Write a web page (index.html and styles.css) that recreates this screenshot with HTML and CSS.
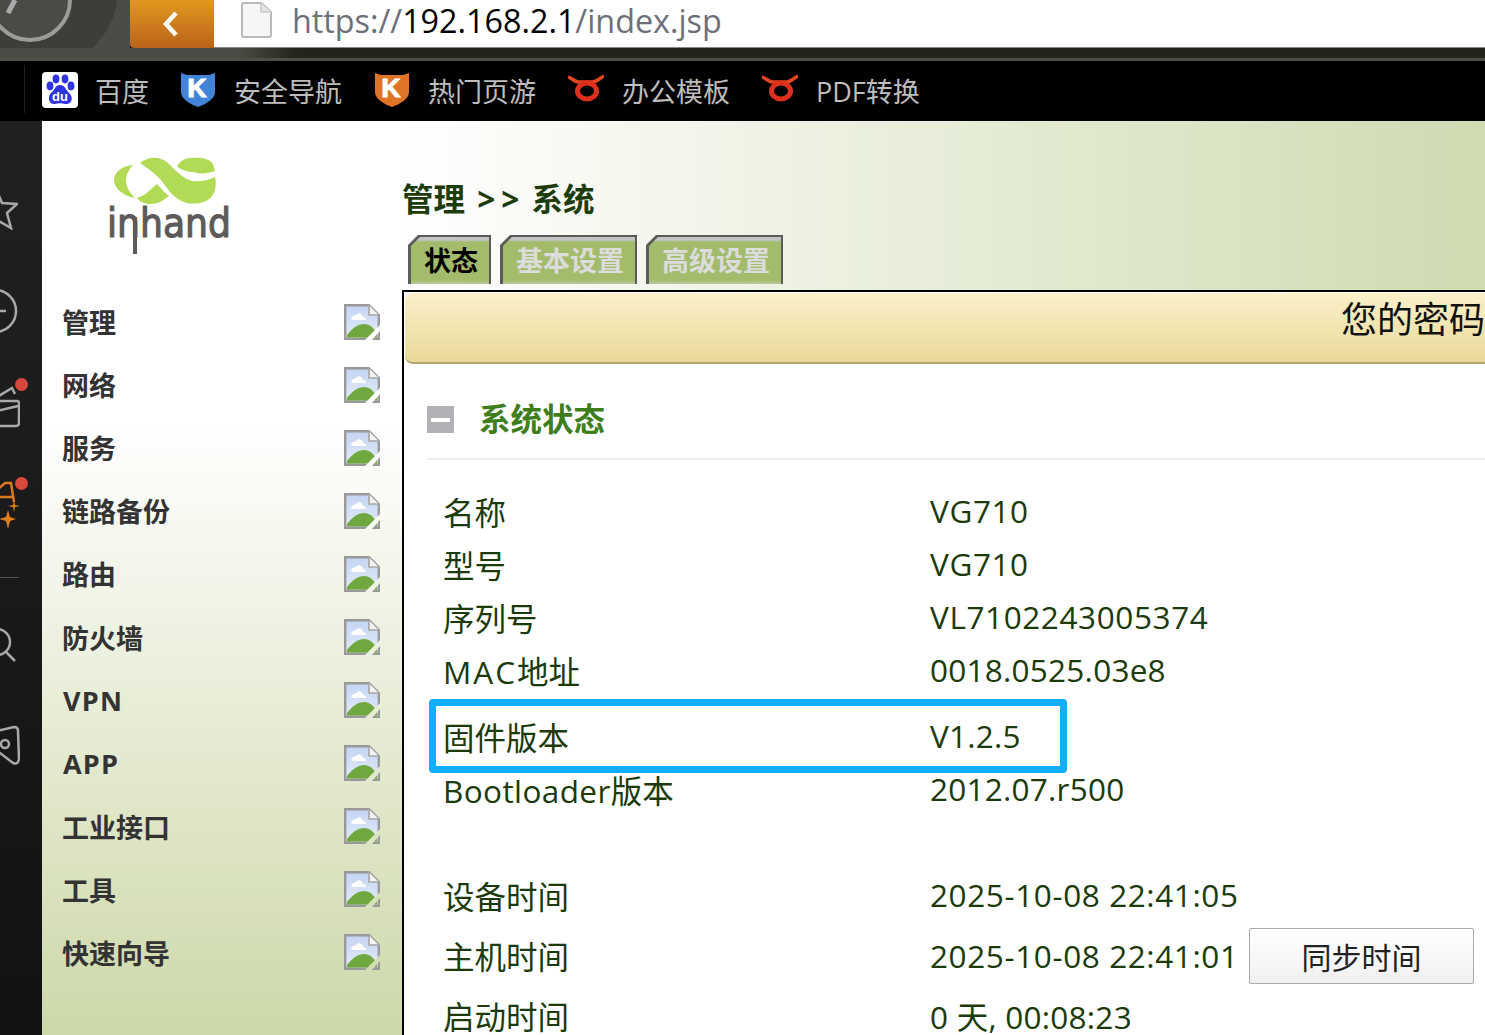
FILE: index.html
```html
<!DOCTYPE html>
<html lang="zh-CN">
<head>
    <meta charset="UTF-8">
    <title>管理 - 系统</title>
    <link rel="stylesheet" href="styles.css">
</head>
<body>
    <svg class="sprites" width="0" height="0">
        <defs>
            <linearGradient id="sky" x1="0" y1="0" x2="0" y2="1">
                <stop offset="0" stop-color="#c3d4f3"/>
                <stop offset="1" stop-color="#e4ecf8"/>
            </linearGradient>
            <mask id="slash" maskUnits="userSpaceOnUse" x="0" y="0" width="36" height="36">
                <rect width="36" height="36" fill="#fff"/>
                <path d="M20 37L37 20V26L27 37Z" fill="#000"/>
            </mask>
            <symbol id="broken" viewBox="0 0 36 36">
                <g mask="url(#slash)">
                    <path d="M1.2 1.2H25L34.8 11V34.8H1.2Z" fill="url(#sky)" stroke="#999" stroke-width="2.4"/>
                    <path d="M25 1.2V11H34.8" fill="#f4f4f4" stroke="#a5a5a5" stroke-width="1.6"/>
                    <path d="M7 15C8 11 12 12 13 10C16 8 19 11 19 13C22 13 23 16 21 16H8Z" fill="#fff"/>
                    <path d="M3 33.5V31C9 23 15 20 21 20C27 21 31 25 33 31V33.5Z" fill="#6fa83f"/>
                </g>
            </symbol>
            <symbol id="ox" viewBox="0 0 36 36">
                <path d="M0 5C4 6 5 9 10 10H25C30 9 32 6 36 4" fill="none" stroke="#e2451f" stroke-width="3.5"/>
                <ellipse cx="19" cy="19" rx="9.5" ry="8" fill="none" stroke="#dd2f1c" stroke-width="5"/>
            </symbol>
        </defs>
    </svg>

    <header class="topbar">
        <div class="wheel">
            <svg width="130" height="48" viewBox="0 0 130 48">
                <circle cx="40" cy="-10" r="78" fill="#3d3d39"/>
                <circle cx="30" cy="0" r="40" fill="#4a4a46" stroke="#9c9c96" stroke-width="4"/>
                <path d="M15 0L8 13" stroke="#aaa" stroke-width="5"/>
            </svg>
        </div>
        <div class="back">
            <svg width="22" height="30" viewBox="0 0 22 30"><path d="M16 4L6 15L16 26" fill="none" stroke="#fff" stroke-width="4.5"/></svg>
        </div>
        <div class="address">
            <svg class="doc" width="32" height="36" viewBox="0 0 32 36">
                <path d="M2 3Q2 1 4 1H21L31 10V33Q31 35 29 35H4Q2 35 2 33Z" fill="#f6f6f6" stroke="#b9b9b9" stroke-width="2"/>
                <path d="M21 1V10H31" fill="#e6e6e6" stroke="#c6c6c6" stroke-width="1.5"/>
            </svg>
            <span class="url">https://<b>192.168.2.1</b>/index.jsp</span>
        </div>
    </header>
    <div class="strip"></div>

    <nav class="bookmarks">
        <span class="bm-sep"></span>
        <a class="bm bm-first">
            <svg width="36" height="36" viewBox="0 0 36 36">
                <rect width="36" height="36" rx="4" fill="#fff"/>
                <g fill="#2f35e0">
                    <ellipse cx="8" cy="14" rx="3.4" ry="4.4"/>
                    <ellipse cx="14" cy="7" rx="3.4" ry="4.4"/>
                    <ellipse cx="23" cy="7" rx="3.4" ry="4.4"/>
                    <ellipse cx="29" cy="14" rx="3.4" ry="4.4"/>
                    <path d="M18 13C13 13 13 18 9 21C5 25 7 33 13 32C16 31 20 31 23 32C30 33 32 25 27 21C24 18 23 13 18 13Z"/>
                </g>
                <text x="18" y="29" class="bd-text">du</text>
            </svg>
            百度
        </a>
        <a class="bm">
            <svg width="36" height="36" viewBox="0 0 36 36">
                <path d="M1 1L7 3H29L35 1V20C35 27 26 32 18 35C10 32 1 27 1 20Z" fill="#4285d8"/>
                <text x="17" y="25" class="shield-text">K</text>
            </svg>
            安全导航
        </a>
        <a class="bm">
            <svg width="36" height="36" viewBox="0 0 36 36">
                <path d="M1 1L7 3H29L35 1V20C35 27 26 32 18 35C10 32 1 27 1 20Z" fill="#df7426"/>
                <text x="17" y="25" class="shield-text">K</text>
            </svg>
            热门页游
        </a>
        <a class="bm"><svg width="36" height="36"><use href="#ox"/></svg>办公模板</a>
        <a class="bm"><svg width="36" height="36"><use href="#ox"/></svg>PDF转换</a>
    </nav>

    <div class="workspace">
        <aside class="dock">
            <div class="dock-item">
                <svg width="18" height="40" viewBox="0 0 18 40"><path d="M-3 1L2 13L17 14L7 23L11 38L-3 30" fill="none" stroke="#a8a8a8" stroke-width="2.5"/></svg>
            </div>
            <div class="dock-item dock-circle">
                <svg width="18" height="44" viewBox="0 0 18 44"><circle cx="-5" cy="22" r="21" fill="none" stroke="#a8a8a8" stroke-width="2.5"/><path d="M-3 22H6" stroke="#a8a8a8" stroke-width="2.5"/></svg>
            </div>
            <div class="dock-item dock-bag">
                <svg width="20" height="44" viewBox="0 0 20 44"><path d="M-3 12L12 3L15 9M-3 16H17Q19 16 19 18V38Q19 41 16 41H-3M-3 26L18 21" fill="none" stroke="#a8a8a8" stroke-width="2.5"/></svg>
                <span class="dot dot-a"></span>
            </div>
            <div class="dock-item">
                <svg width="20" height="50" viewBox="0 0 20 50"><path d="M-2 9L5 3L11 3L14 22M-1 17H12" fill="none" stroke="#d97a1e" stroke-width="2.5"/><path d="M14 20L15 25L20 26L15 27L14 32L13 27L8 26L13 25ZM8 30L10 37L16 39L10 41L8 49L6 41L-1 39L6 37Z" fill="#e07f1c"/></svg>
                <span class="dot dot-b"></span>
            </div>
            <div class="dock-line"></div>
            <div class="dock-item dock-search">
                <svg width="18" height="44" viewBox="0 0 18 44"><circle cx="-3" cy="19" r="13" fill="none" stroke="#a8a8a8" stroke-width="2.5"/><path d="M6 29L15 38" stroke="#a8a8a8" stroke-width="2.5"/></svg>
            </div>
            <div class="dock-item dock-game">
                <svg width="20" height="44" viewBox="0 0 20 44"><path d="M-3 6L14 2Q18 2 18 6L19 34Q18 40 13 38L0 28H-3" fill="none" stroke="#a8a8a8" stroke-width="2.5"/><circle cx="5" cy="19" r="4" fill="none" stroke="#a8a8a8" stroke-width="2.5"/></svg>
            </div>
        </aside>

        <aside class="sidebar">
            <div class="logo">
                <svg width="130" height="98" viewBox="0 0 130 98">
                    <path d="M26 8C14 9 7 16 7 23C7 31 16 39 28 41C22 35 19 29 19 24C19 18 22 12 26 8Z" fill="#b1da55"/>
                    <path d="M33 6C38 2 44 0 50 1C58 2 62 7 66 11C72 17 78 22 85 24C92 25 100 24 108 20C110 28 108 38 102 42C96 47 88 47 80 46C72 44 67 39 63 35C58 29 55 23 50 19C45 14 39 10 33 6Z" fill="#b1da55"/>
                    <path d="M70 9C73 4 78 1 84 1C92 0 102 1 106 7L108 14C100 17 92 17 86 15C80 15 76 13 72 11Z" fill="#b1da55"/>
                    <path d="M30 41C36 39 40 36 43 33L50 27C54 31 58 36 62 39C56 44 50 47 44 47C38 47 33 45 30 41Z" fill="#b1da55"/>
                    <text class="logo-text" x="0" y="80" textLength="124" lengthAdjust="spacingAndGlyphs">inhand</text>
                    <path d="M28 60V97" stroke="#5d5a59" stroke-width="4"/>
                </svg>
            </div>
            <ul class="menu">
                <li>管理<svg width="36" height="36"><use href="#broken"/></svg></li>
                <li>网络<svg width="36" height="36"><use href="#broken"/></svg></li>
                <li>服务<svg width="36" height="36"><use href="#broken"/></svg></li>
                <li>链路备份<svg width="36" height="36"><use href="#broken"/></svg></li>
                <li>路由<svg width="36" height="36"><use href="#broken"/></svg></li>
                <li>防火墙<svg width="36" height="36"><use href="#broken"/></svg></li>
                <li><span class="latin">VPN</span><svg width="36" height="36"><use href="#broken"/></svg></li>
                <li><span class="latin">APP</span><svg width="36" height="36"><use href="#broken"/></svg></li>
                <li>工业接口<svg width="36" height="36"><use href="#broken"/></svg></li>
                <li>工具<svg width="36" height="36"><use href="#broken"/></svg></li>
                <li>快速向导<svg width="36" height="36"><use href="#broken"/></svg></li>
            </ul>
        </aside>

        <main class="main">
            <div class="main-head">
                <h1 class="crumb">管理 <span class="crumb-sep">&gt;&gt;</span> 系统</h1>
                <div class="tabs">
                    <div class="tab active"><span>状态</span></div>
                    <div class="tab"><span>基本设置</span></div>
                    <div class="tab"><span>高级设置</span></div>
                </div>
            </div>
            <div class="panel">
                <div class="notice">您的密码</div>
                <div class="section-head">
                    <span class="collapse"></span>
                    <h2>系统状态</h2>
                </div>
                <div class="info">
                    <div class="row"><span>名称</span><span class="val">VG710</span></div>
                    <div class="row"><span>型号</span><span class="val">VG710</span></div>
                    <div class="row"><span>序列号</span><span class="val">VL7102243005374</span></div>
                    <div class="row"><span><span class="mac">MAC</span>地址</span><span class="val tight">0018.0525.03e8</span></div>
                    <div class="row row-marked"><span>固件版本</span><span class="val tight">V1.2.5</span><i class="marker"></i></div>
                    <div class="row"><span><span class="boot">Bootloader</span>版本</span><span class="val tight">2012.07.r500</span></div>
                    <div class="row"></div>
                    <div class="row"><span>设备时间</span><span class="val">2025-10-08 22:41:05</span></div>
                    <div class="row row-tall row-host"><span>主机时间</span><span class="val">2025-10-08 22:41:01</span><button class="sync">同步时间</button></div>
                    <div class="row row-tall"><span>启动时间</span><span class="val tight">0 天, 00:08:23</span></div>
                </div>
            </div>
        </main>
    </div>
</body>
</html>
```
FILE: styles.css
```css
* {
    box-sizing: border-box;
}
html, body {
    margin: 0;
    height: 100%;
    overflow: hidden;
}
body {
    display: flex;
    flex-direction: column;
    font-family: "Open Sans", "Noto Sans CJK SC", sans-serif;
    background-color: #000;
}
.sprites {
    position: absolute;
}

/* browser chrome */
.topbar {
    display: flex;
    height: 48px;
    flex: none;
}
.wheel {
    width: 130px;
    background: #4c4c46;
    overflow: hidden;
}
.wheel svg {
    display: block;
}
.back {
    width: 84px;
    display: flex;
    align-items: center;
    justify-content: center;
    background: linear-gradient(#e2981f, #b8631a);
    border-bottom-left-radius: 4px;
    padding-right: 2px;
}
.address {
    flex: 1;
    display: flex;
    align-items: flex-start;
    background-color: #fff;
    border-bottom: 1px solid #888;
    padding-left: 26px;
}
.doc {
    margin-top: 2px;
    flex: none;
}
.url {
    margin-left: 20px;
    font-size: 32.3px;
    line-height: 41px;
    color: #6d6f7a;
}
.url b {
    font-weight: 400;
    color: #000;
}
.strip {
    height: 13px;
    flex: none;
    background: linear-gradient(to right, #4c4c46 16%, #24241c 20%);
    border-bottom: 3px solid #4f4f48;
}

.bookmarks {
    display: flex;
    align-items: center;
    gap: 32px;
    height: 60px;
    flex: none;
    padding: 0 0 2px 42px;
    background-color: #000;
    position: relative;
}
.bm-sep {
    position: absolute;
    left: 24px;
    top: 4px;
    height: 48px;
    border-left: 1px solid #222;
}
.bm {
    display: flex;
    align-items: center;
    gap: 18px;
    font-size: 27px;
    color: #bdbdbd;
}
.bm-first {
    gap: 17px;
    margin-right: -1px;
}
.bd-text {
    font: 700 13px "Liberation Sans", sans-serif;
    fill: #fff;
    text-anchor: middle;
}
.shield-text {
    font: 700 26px "Liberation Sans", sans-serif;
    fill: #fff;
    stroke: #fff;
    stroke-width: 1.2px;
    text-anchor: middle;
}

.workspace {
    flex: 1;
    display: flex;
    min-height: 0;
}

/* left dock of the browser */
.dock {
    width: 42px;
    flex: none;
    background: linear-gradient(#212121, #121212);
    padding-top: 40px;
    display: flex;
    flex-direction: column;
    overflow: hidden;
}
.dock-item {
    position: relative;
    height: 98px;
    flex: none;
    display: flex;
    align-items: center;
}
.dock-circle {
    margin-top: 3px;
}
.dock-bag {
    margin-top: -2px;
}
.dock-line {
    width: 19px;
    height: 1px;
    margin-top: 23px;
    background-color: #555;
    flex: none;
}
.dock-search {
    margin-top: 18px;
}
.dock-game {
    margin-top: 4px;
}
.dot {
    position: absolute;
    width: 13px;
    height: 13px;
    right: 14px;
    border-radius: 50%;
    background-color: #d9483f;
}
.dot-a {
    top: 20px;
}
.dot-b {
    top: 21px;
}

/* router page */
.sidebar {
    width: 360px;
    flex: none;
    background: linear-gradient(#fff 33%, #cdd8a9 100%);
}
.logo {
    height: 169px;
    padding: 36px 0 0 65px;
}
.logo-text {
    font: 400 40px "DejaVu Sans", sans-serif;
    fill: #5d5a59;
    stroke: #5d5a59;
    stroke-width: 1.2px;
}
.menu {
    list-style: none;
    margin: 0;
    padding: 0 22px 0 20px;
}
.menu li {
    height: 63.1px;
    display: flex;
    align-items: center;
    justify-content: space-between;
    font-size: 27px;
    font-weight: 700;
    color: #333;
}
.latin {
    margin-left: 1px;
    letter-spacing: 1.2px;
}
.main {
    flex: 1;
    min-width: 0;
    display: flex;
    flex-direction: column;
    overflow: hidden;
}
.main-head {
    height: 169px;
    flex: none;
    background: linear-gradient(to right, #fff, #cfdbb1);
    padding-top: 56px;
}
.crumb {
    margin: 0;
    font-size: 31.5px;
    line-height: 44px;
    color: #1d3c0c;
}
.crumb-sep {
    margin: 0 -2px 0 4px;
    letter-spacing: 6px;
}
.tabs {
    display: flex;
    gap: 9px;
    margin: 14px 0 0 6px;
}
.tab {
    height: 49px;
    padding: 2px 2px 0 3px;
    background-color: #5b5b5b;
    clip-path: polygon(10px 0, 100% 0, 100% 100%, 0 100%, 0 10px);
}
.tab span {
    display: block;
    height: 47px;
    padding: 4px 11px 0 13px;
    font-size: 27px;
    line-height: 40px;
    font-weight: 700;
    color: #dcdcdc;
    background: linear-gradient(#c4c4c4 3px, #a3bc6c 5px, #a3bc6c 43px, #bcc8a0 47px);
    clip-path: polygon(9px 0, 100% 0, 100% 100%, 0 100%, 0 9px);
}
.tab.active span {
    color: #000;
}
.panel {
    flex: 1;
    min-height: 0;
    background-color: #fff;
    border-top: 2px solid #000;
    border-left: 2px solid #000;
    padding-top: 1px;
}
.notice {
    height: 71px;
    margin-left: 1px;
    padding-left: 936px;
    font-size: 36px;
    line-height: 54px;
    white-space: nowrap;
    color: #111;
    overflow: hidden;
    background: linear-gradient(#fbf0c9, #e8d999);
    border-bottom: 2px solid #b3a670;
    border-top-left-radius: 8px;
    border-bottom-left-radius: 8px;
}
.section-head {
    display: flex;
    align-items: center;
    height: 96px;
    margin-left: 23px;
    border-bottom: 2px solid #eee;
    padding-top: 14px;
}
.collapse {
    width: 27px;
    height: 27px;
    margin-top: 3px;
    background-color: #b0b2b6;
    display: flex;
    align-items: center;
    justify-content: center;
}
.collapse::before {
    content: "";
    width: 19px;
    height: 4px;
    background-color: #fff;
}
.section-head h2 {
    margin: -2px 0 0 25px;
    font-size: 31.5px;
    color: #3f7e1c;
}
.info {
    margin: 24px 0 0 39px;
}
.row {
    position: relative;
    display: grid;
    grid-template-columns: 487px 319px 225px;
    align-items: center;
    height: 53px;
    font-size: 31.5px;
    white-space: nowrap;
    color: #1c3a0a;
}
.val {
    letter-spacing: 0.6px;
}
.val.tight {
    letter-spacing: 0.25px;
}
.mac {
    letter-spacing: 2px;
}
.boot {
    letter-spacing: 0.4px;
}
.row-marked {
    margin-top: 13px;
}
.row-tall {
    height: 60px;
}
.row-host {
    margin-top: 4px;
}
.marker {
    position: absolute;
    left: -14px;
    top: -10px;
    width: 638px;
    height: 74px;
    border: 7px solid #10aeff;
    border-radius: 4px;
}
.sync {
    height: 56px;
    width: 225px;
    margin-top: 1px;
    padding: 0;
    font-family: inherit;
    font-size: 30px;
    color: #222;
    background: linear-gradient(#fff, #f0f0f0);
    border: 1px solid #aaa;
    border-radius: 2px;
}
```
